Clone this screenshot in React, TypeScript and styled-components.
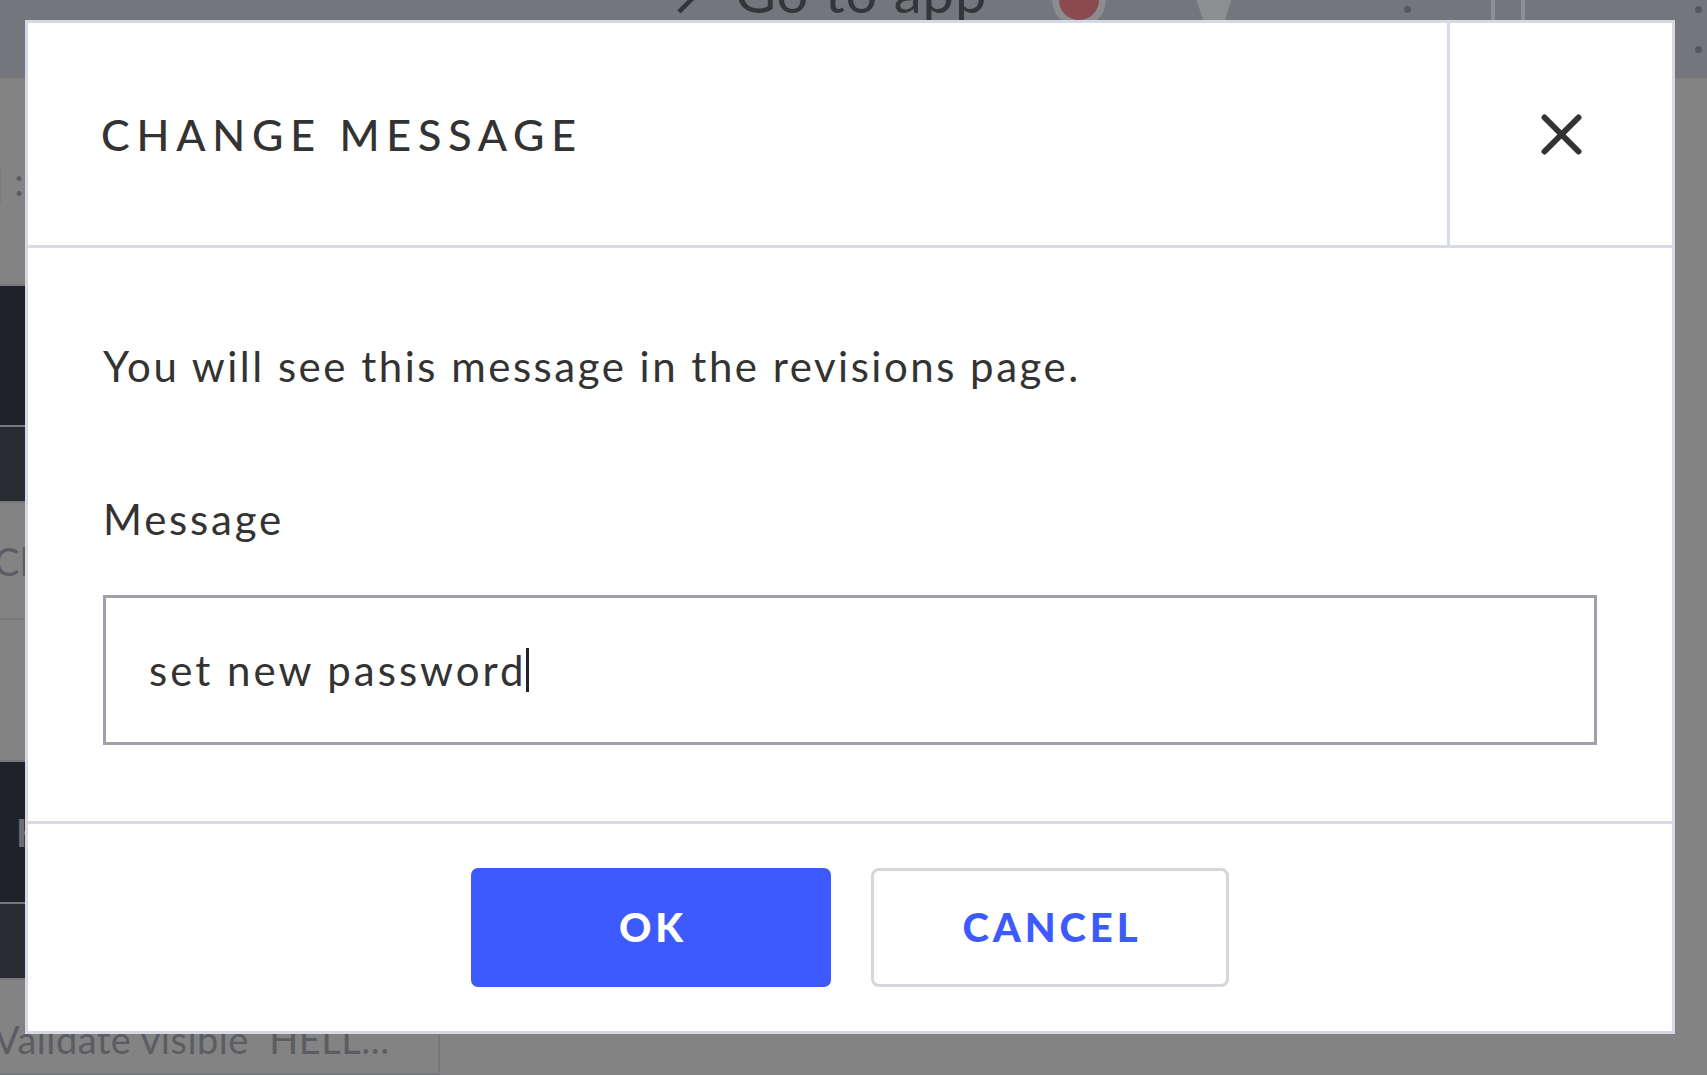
import React from 'react';
import styled, { createGlobalStyle } from 'styled-components';

const GlobalStyle = createGlobalStyle`
  html, body {
    margin: 0;
    padding: 0;
    height: 100%;
    overflow: hidden;
  }
  body {
    font-family: Lato, 'Noto Sans', sans-serif;
    background: #838383;
  }
`;

// ---- background editor (dimmed behind the dialog) ----

const Page = styled.div`
  display: flex;
  flex-direction: column;
  height: 100vh;
`;

const TopBar = styled.div`
  display: flex;
  align-items: flex-start;
  height: 78px;
  background: #75767b;
  overflow: hidden;
  flex-shrink: 0;
`;

const GoToApp = styled.div`
  display: flex;
  align-items: baseline;
  flex-shrink: 0;
  gap: 16px;
  margin: -42px 0 0 676px;
  font-size: 56px;
  letter-spacing: 1px;
  white-space: nowrap;
  color: #35363a;
`;

const RecordDot = styled.span`
  flex-shrink: 0;
  width: 40px;
  height: 40px;
  margin: -20px 0 0 72px;
  border-radius: 50%;
  background: #8a4a50;
  box-shadow: 0 0 0 7px #8b8c90;
`;

const PlayShape = styled.span`
  flex-shrink: 0;
  width: 0;
  height: 0;
  margin: -8px 0 0 95px;
  border-left: 20px solid transparent;
  border-right: 20px solid transparent;
  border-top: 62px solid #8d8e92;
`;

const Kebab = styled.span<{ $left: number }>`
  flex-shrink: 0;
  display: flex;
  flex-direction: column;
  gap: 33px;
  margin: 6px 0 0 ${(p) => p.$left}px;
  &::before,
  &::after {
    content: '';
    width: 7px;
    height: 7px;
    border-radius: 50%;
    background: #55585c;
  }
`;

const SquareIcon = styled.span`
  flex-shrink: 0;
  width: 34px;
  height: 48px;
  margin: 0 0 0 80px;
  border: 4px solid #8e8f93;
  border-top: 0;
  box-sizing: border-box;
`;

const Workspace = styled.div`
  display: flex;
  flex: 1;
  min-height: 0;
`;

const SidePanel = styled.div`
  width: 438px;
  display: flex;
  flex-direction: column;
  border-right: 2px solid #77787c;
`;

type RowKind = 'plain' | 'dark' | 'shade';

const rowColors: Record<RowKind, string> = {
  plain: '#838383',
  dark: '#1f2229',
  shade: '#292b30',
};

const PanelRow = styled.div<{ $kind: RowKind; $h: number; $top?: boolean }>`
  height: ${(p) => p.$h}px;
  flex-shrink: 0;
  background: ${(p) => rowColors[p.$kind]};
  border-bottom: 2px solid #77787c;
  display: flex;
  align-items: ${(p) => (p.$top ? 'flex-start' : 'center')};
  padding-top: ${(p) => (p.$top ? '36px' : '0')};
  font-size: 38px;
  line-height: 46px;
  letter-spacing: 0.5px;
  color: #5c5d62;
  white-space: nowrap;
  overflow: hidden;
  box-sizing: border-box;
`;

const RowText = styled.span`
  margin-left: -6px;
`;

const DarkLetter = styled.span`
  margin-left: 16px;
  color: #6c6e72;
  font-weight: 700;
`;

// ---- dialog ----

const Overlay = styled.div`
  position: fixed;
  inset: 0;
  padding: 20px 0 0 25px;
`;

const Modal = styled.section`
  box-sizing: border-box;
  width: 1650px;
  background: #fff;
  border: 3px solid #d6d9e5;
  display: flex;
  flex-direction: column;
`;

const Header = styled.header`
  display: flex;
  height: 225px;
  box-sizing: border-box;
  border-bottom: 3px solid #d8dbe6;
`;

const TitleCell = styled.div`
  flex: 1;
  display: flex;
  align-items: center;
  padding-left: 73px;
`;

const Title = styled.h2`
  margin: 0;
  font-family: Lato, sans-serif;
  font-weight: 500;
  font-size: 43px;
  line-height: 1;
  letter-spacing: 6.8px;
  color: #333333;
`;

const CloseButton = styled.button`
  width: 225px;
  box-sizing: border-box;
  border: 0;
  border-left: 3px solid #d8dbe6;
  background: #fff;
  padding: 0;
  display: flex;
  align-items: center;
  justify-content: center;
  cursor: pointer;
`;

const Body = styled.div`
  padding: 93px 75px 76px;
`;

const Lead = styled.p`
  margin: 0;
  font-size: 42px;
  line-height: 50px;
  letter-spacing: 2.5px;
  color: #333333;
`;

const FieldLabel = styled.label`
  display: block;
  margin-top: 103px;
  font-size: 42px;
  line-height: 50px;
  letter-spacing: 2.8px;
  color: #333333;
`;

const FieldBox = styled.div`
  margin-top: 51px;
  height: 150px;
  box-sizing: border-box;
  border: 3px solid #9ea1ab;
  display: flex;
  align-items: center;
  padding-left: 43px;
  font-size: 42px;
  letter-spacing: 3px;
  color: #333333;
`;

const Caret = styled.span`
  display: inline-block;
  width: 3px;
  height: 44px;
  margin-left: -1px;
  background: #222;
`;

const Footer = styled.footer`
  border-top: 3px solid #d8dbe6;
  padding: 44px 0;
  display: flex;
  justify-content: center;
  gap: 40px;
`;

const ActionButton = styled.button<{ $primary?: boolean }>`
  width: ${(p) => (p.$primary ? 360 : 358)}px;
  height: 119px;
  box-sizing: border-box;
  border-radius: ${(p) => (p.$primary ? 7 : 8)}px;
  border: ${(p) => (p.$primary ? '0' : '3px solid #d3d6db')};
  background: ${(p) => (p.$primary ? '#3d5afe' : '#ffffff')};
  color: ${(p) => (p.$primary ? '#ffffff' : '#3d5afe')};
  font-family: Lato, sans-serif;
  font-weight: 900;
  font-size: 40px;
  line-height: 1;
  letter-spacing: 3.9px;
  padding: 0 0 2px 4px;
  cursor: pointer;
`;

const CloseIcon = () => (
  <svg width="41" height="41" viewBox="0 0 41 41" fill="none">
    <path
      d="M3.5 3.5L37.5 37.5M37.5 3.5L3.5 37.5"
      stroke="#333333"
      strokeWidth="6"
      strokeLinecap="round"
    />
  </svg>
);

const App: React.FC = () => (
  <>
    <GlobalStyle />
    <Page>
      <TopBar>
        <GoToApp>
          <span>↗</span>
          <span>Go to app</span>
        </GoToApp>
        <RecordDot />
        <PlayShape />
        <Kebab $left={170} />
        <SquareIcon />
        <Kebab $left={170} />
      </TopBar>
      <Workspace>
        <SidePanel>
          <PanelRow $kind="plain" $h={208}>
            <RowText>| :</RowText>
          </PanelRow>
          <PanelRow $kind="dark" $h={141} />
          <PanelRow $kind="shade" $h={76} />
          <PanelRow $kind="plain" $h={117}>
            <RowText>Click</RowText>
          </PanelRow>
          <PanelRow $kind="plain" $h={142} />
          <PanelRow $kind="dark" $h={142}>
            <DarkLetter>H</DarkLetter>
          </PanelRow>
          <PanelRow $kind="shade" $h={76} />
          <PanelRow $kind="plain" $h={95} $top>
            <RowText>Validate visible&nbsp;&nbsp;HELL...</RowText>
          </PanelRow>
        </SidePanel>
      </Workspace>
    </Page>
    <Overlay>
      <Modal role="dialog" aria-labelledby="change-message-title">
        <Header>
          <TitleCell>
            <Title id="change-message-title">CHANGE MESSAGE</Title>
          </TitleCell>
          <CloseButton aria-label="Close">
            <CloseIcon />
          </CloseButton>
        </Header>
        <Body>
          <Lead>You will see this message in the revisions page.</Lead>
          <FieldLabel>Message</FieldLabel>
          <FieldBox>
            set new password
            <Caret />
          </FieldBox>
        </Body>
        <Footer>
          <ActionButton $primary>OK</ActionButton>
          <ActionButton>CANCEL</ActionButton>
        </Footer>
      </Modal>
    </Overlay>
  </>
);

export default App;
